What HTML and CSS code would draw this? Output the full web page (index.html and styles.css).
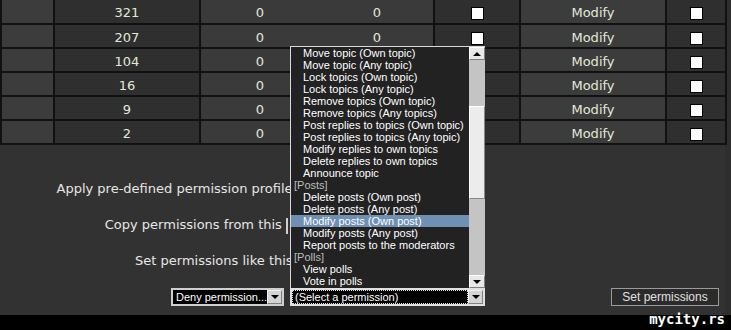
FILE: index.html
```html
<!DOCTYPE html>
<html lang="en">
<head>
    <meta charset="UTF-8">
    <title>Permissions</title>
    <link rel="stylesheet" href="styles.css">
</head>
<body>
    <div class="page">
        <table class="perms">
            <tr>
                <td class="c1"></td><td class="c2">321</td><td class="c3">0</td><td class="c4">0</td>
                <td class="c5"><input type="checkbox"></td><td class="c6">Modify</td><td class="c7"><input type="checkbox"></td>
            </tr>
            <tr>
                <td class="c1"></td><td class="c2">207</td><td class="c3">0</td><td class="c4">0</td>
                <td class="c5"><input type="checkbox"></td><td class="c6">Modify</td><td class="c7"><input type="checkbox"></td>
            </tr>
            <tr>
                <td class="c1"></td><td class="c2">104</td><td class="c3">0</td><td class="c4">0</td>
                <td class="c5"><input type="checkbox"></td><td class="c6">Modify</td><td class="c7"><input type="checkbox"></td>
            </tr>
            <tr>
                <td class="c1"></td><td class="c2">16</td><td class="c3">0</td><td class="c4">0</td>
                <td class="c5"><input type="checkbox"></td><td class="c6">Modify</td><td class="c7"><input type="checkbox"></td>
            </tr>
            <tr>
                <td class="c1"></td><td class="c2">9</td><td class="c3">0</td><td class="c4">0</td>
                <td class="c5"><input type="checkbox"></td><td class="c6">Modify</td><td class="c7"><input type="checkbox"></td>
            </tr>
            <tr>
                <td class="c1"></td><td class="c2">2</td><td class="c3">0</td><td class="c4">0</td>
                <td class="c5"><input type="checkbox"></td><td class="c6">Modify</td><td class="c7"><input type="checkbox"></td>
            </tr>
        </table>

        <div class="form">
            <div class="label">Apply pre-defined permission profile:</div>
            <div class="label">Copy permissions from this <span class="stub"></span></div>
            <div class="label">Set permissions like this:</div>

            <div class="controls">
                <div class="left">
                    <div class="select deny">
                        <span class="val">Deny permission...</span>
                        <span class="arrow"><i class="down"></i></span>
                    </div>
                </div>
                <div class="right">
                    <div class="combo">
                        <ul class="list">
                            <li class="opt">Move topic (Own topic)</li>
                            <li class="opt">Move topic (Any topic)</li>
                            <li class="opt">Lock topics (Own topic)</li>
                            <li class="opt">Lock topics (Any topic)</li>
                            <li class="opt">Remove topics (Own topic)</li>
                            <li class="opt">Remove topics (Any topics)</li>
                            <li class="opt">Post replies to topics (Own topic)</li>
                            <li class="opt">Post replies to topics (Any topic)</li>
                            <li class="opt">Modify replies to own topics</li>
                            <li class="opt">Delete replies to own topics</li>
                            <li class="opt">Announce topic</li>
                            <li class="grp">[Posts]</li>
                            <li class="opt">Delete posts (Own post)</li>
                            <li class="opt">Delete posts (Any post)</li>
                            <li class="opt sel">Modify posts (Own post)</li>
                            <li class="opt">Modify posts (Any post)</li>
                            <li class="opt">Report posts to the moderators</li>
                            <li class="grp">[Polls]</li>
                            <li class="opt">View polls</li>
                            <li class="opt">Vote in polls</li>
                        </ul>
                        <div class="scroll">
                            <span class="sbtn"><i class="up"></i></span>
                            <span class="track"><span class="thumb"></span></span>
                            <span class="sbtn"><i class="down"></i></span>
                        </div>
                        <div class="select perm">
                            <span class="val">(Select a permission)</span>
                            <span class="arrow"><i class="down"></i></span>
                        </div>
                    </div>
                    <button class="btn">Set permissions</button>
                </div>
            </div>
        </div>
    </div>
    <div class="foot"></div>
    <div class="mark">mycity.rs</div>
</body>
</html>
```

FILE: styles.css
```css
*{
    padding: 0;
    margin: 0;
    box-sizing: border-box;
}
body{
    background: #2e2e2e;
    width: 731px;
    height: 330px;
    overflow: hidden;
    position: relative;
    font-family: "DejaVu Sans", Verdana, sans-serif;
}
.page{
    width: 725px;
    height: 315px;
    background: #323232;
}
.perms{
    width: 725px;
    border-collapse: collapse;
    table-layout: fixed;
    font-size: 13px;
    color: #e2e9d6;
    text-align: center;
}
.perms tr{
    height: 24px;
}
.perms td{
    border: 2px solid #111;
    border-top: 0;
    padding: 2px 0 0;
}
.perms tr + tr td{
    border-top: 2px solid #111;
}
.c1{ width: 53px; background: #3c3c3c; }
.c2{ width: 146px; background: #2f2f2f; }
.c3{ width: 120px; background: #3a3a3a; border-right-color: #3a3a3a !important; }
.c4{ width: 114px; background: #3a3a3a; }
.c5{ width: 86px; background: #2f2f2f; }
.c6{ width: 146px; background: #3c3c3c; }
.c7{ width: 60px; background: #2f2f2f; }
.perms input{
    appearance: none;
    width: 13px;
    height: 13px;
    background: #fff;
    border: 1px solid #000;
    vertical-align: middle;
    display: inline-block;
}

.form{
    padding-top: 26px;
    display: flex;
    flex-direction: column;
}
.label{
    height: 36px;
    line-height: 36px;
    width: 297px;
    text-align: right;
    font-size: 13px;
    color: #e6e6e6;
    white-space: nowrap;
}
.stub{
    display: inline-block;
    width: 11px;
    height: 16px;
    vertical-align: middle;
    border-left: 2px solid #cfcfcf;
}
.controls{
    margin-top: 9px;
    display: flex;
    height: 18px;
}
.left{
    width: 290px;
    display: flex;
    justify-content: flex-end;
    padding-right: 6px;
}
.right{
    flex: 1;
    display: flex;
    justify-content: space-between;
    padding-right: 6px;
}

.select{
    height: 18px;
    border: 2px solid #cfcfcf;
    background: #000;
    color: #fff;
    display: flex;
    align-items: center;
    font-family: "Liberation Sans", Arial, sans-serif;
    font-size: 11px;
}
.deny{
    width: 113px;
}
.perm{
    width: 195px;
    border-color: #e0e0e0;
}
.select .val{
    flex: 1;
    padding-left: 3px;
    white-space: nowrap;
    line-height: 12px;
}
.perm .val{
    margin: 0 1px;
    padding-left: 2px;
    outline: 1px dotted #ddd;
}
.arrow{
    width: 15px;
    height: 14px;
    background: #d4d4d4;
    border: 1px solid #f0f0f0;
    border-right-color: #808080;
    border-bottom-color: #808080;
    display: flex;
    align-items: center;
    justify-content: center;
}
i.down, i.up{
    width: 0;
    height: 0;
    border-left: 4px solid transparent;
    border-right: 4px solid transparent;
}
i.down{
    border-top: 4px solid #000;
}
i.up{
    border-bottom: 4px solid #000;
}

.combo{
    position: relative;
}
.list{
    position: absolute;
    left: 0;
    bottom: 100%;
    width: 179px;
    height: 242px;
    background: #222;
    border: 1px solid #d8d8d8;
    border-right: 0;
    border-bottom: 0;
    list-style: none;
    font-family: "Liberation Sans", Arial, sans-serif;
    font-size: 11px;
    color: #fff;
    z-index: 2;
}
.list li{
    height: 12px;
    line-height: 12px;
    white-space: nowrap;
}
.opt{
    padding-left: 12px;
}
.grp{
    padding-left: 3px;
    color: #bdbdbd;
}
.sel{
    background: #6f8fb3;
}
.scroll{
    position: absolute;
    left: 179px;
    bottom: 100%;
    width: 16px;
    height: 242px;
    border-top: 1px solid #d8d8d8;
    background: #c4c4c4;
    display: flex;
    flex-direction: column;
    z-index: 2;
}
.sbtn{
    height: 13px;
    background: #e8e8e8;
    border: 1px solid #fff;
    border-right-color: #808080;
    border-bottom-color: #808080;
    display: flex;
    align-items: center;
    justify-content: center;
}
.track{
    flex: 1;
    padding-top: 46px;
}
.thumb{
    display: block;
    height: 93px;
    background: #ececec;
    border: 1px solid #fff;
    border-right-color: #888;
    border-bottom-color: #888;
}

.btn{
    width: 108px;
    height: 18px;
    background: #2b2b2b;
    border: 1px solid #9a9a9a;
    color: #e0e0e0;
    font-family: "Liberation Sans", Arial, sans-serif;
    font-size: 12px;
}

.foot{
    height: 15px;
    background: #000;
}
.mark{
    position: absolute;
    right: 6px;
    bottom: 3px;
    color: #fff;
    font-family: "DejaVu Sans Mono", monospace;
    font-weight: bold;
    font-size: 14px;
    line-height: 16px;
}
```
